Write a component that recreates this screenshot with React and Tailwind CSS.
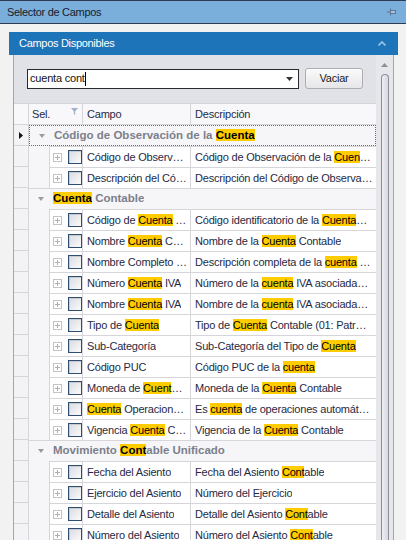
import React from "react";

/* Selector de Campos — panel de búsqueda de campos con grilla agrupada */

const GRUPOS = [
  {
    titulo: "Código de Observación de la [Cuenta]",
    foco: true,
    filas: [
      ["Código de Observ…", "Código de Observación de la [Cuen]…"],
      ["Descripción del Có…", "Descripción del Código de Observa…"],
    ],
  },
  {
    titulo: "[Cuenta] Contable",
    filas: [
      ["Código de [Cuenta] …", "Código identificatorio de la [Cuenta]…"],
      ["Nombre [Cuenta] C…", "Nombre de la [Cuenta] Contable"],
      ["Nombre Completo …", "Descripción completa de la [cuenta] …"],
      ["Número [Cuenta] IVA", "Número de la [cuenta] IVA asociada…"],
      ["Nombre [Cuenta] IVA", "Nombre de la [cuenta] IVA asociada…"],
      ["Tipo de [Cuenta]", "Tipo de [Cuenta] Contable (01: Patr…"],
      ["Sub-Categoría", "Sub-Categoría del Tipo de [Cuenta]"],
      ["Código PUC", "Código PUC de la [cuenta]"],
      ["Moneda de [Cuent]…", "Moneda de la [Cuenta] Contable"],
      ["[Cuenta] Operacion…", "Es [cuenta] de operaciones automát…"],
      ["Vigencia [Cuenta] C…", "Vigencia de la [Cuenta] Contable"],
    ],
  },
  {
    titulo: "Movimiento [Cont]able Unificado",
    filas: [
      ["Fecha del Asiento", "Fecha del Asiento [Cont]able"],
      ["Ejercicio del Asiento", "Número del Ejercicio"],
      ["Detalle del Asiento", "Detalle del Asiento [Cont]able"],
      ["Número del Asiento", "Número del Asiento [Cont]able"],
    ],
  },
];

// "[texto]" = coincidencia resaltada
function Resaltado({ texto }) {
  return (
    <span className="block overflow-hidden whitespace-nowrap">
      {texto.split(/(\[[^\]]+\])/).map((p, i) =>
        p.startsWith("[") ? (
          <span key={i} className="bg-[#ffcc00] text-black">
            {p.slice(1, -1)}
          </span>
        ) : (
          <React.Fragment key={i}>{p}</React.Fragment>
        )
      )}
    </span>
  );
}

function Expandir() {
  return (
    <svg width="9" height="9" viewBox="0 0 9 9" className="shrink-0">
      <rect x="0.5" y="0.5" width="8" height="8" fill="#fff" stroke="#c4c4c8" />
      <path d="M2 4.5h5M4.5 2v5" stroke="#b0b0b6" />
    </svg>
  );
}

function Check() {
  return (
    <div className="w-[14px] h-[14px] shrink-0 border border-[#2e4d72] bg-gradient-to-br from-[#d9dbe0] to-[#fbfbfc] shadow-[inset_1px_1px_0_#c8cad0]" />
  );
}

function FilaGrupo({ titulo, foco }) {
  return (
    <div className="flex h-[21px]">
      <div className="w-[15px] shrink-0 border-r border-b border-[#d6d6da] bg-[#f3f3f5] flex items-center justify-center">
        {foco && (
          <svg width="4" height="7" viewBox="0 0 4 7">
            <path d="M0 0l4 3.5L0 7z" fill="#111" />
          </svg>
        )}
      </div>
      <div
        className={
          "flex-1 min-w-0 flex items-center bg-[#f6f6f8] " +
          (foco ? "border border-dotted border-[#6a6a70]" : "border-t border-[#d6d6da]")
        }
      >
        <svg width="6" height="4" viewBox="0 0 6 4" className="ml-[9px] mr-[9px] shrink-0">
          <path d="M0 0h6L3 4z" fill="#9a9aa2" />
        </svg>
        <span className="font-bold text-[11.5px] tracking-normal text-[#7c7f8b]">
          <Resaltado texto={titulo} />
        </span>
      </div>
    </div>
  );
}

function FilaDato({ campo, desc }) {
  return (
    <div className="flex h-[21px]">
      <div className="w-[15px] shrink-0 border-r border-b border-[#d6d6da] bg-[#f3f3f5]" />
      <div className="w-[21px] shrink-0 border-r border-[#d6d6da] bg-[#f6f6f8]" />
      <div className="w-[33px] shrink-0 border-t border-r border-[#d6d6da] bg-white flex items-center pl-[3px] gap-[6px]">
        <Expandir />
        <Check />
      </div>
      <div className="w-[108px] shrink-0 border-t border-r border-[#d6d6da] bg-white flex items-center px-[4px] overflow-hidden text-[#1f2a44]">
        <Resaltado texto={campo} />
      </div>
      <div className="flex-1 min-w-0 border-t border-[#d6d6da] bg-white flex items-center px-[4px] overflow-hidden text-[#1f2a44]">
        <Resaltado texto={desc} />
      </div>
    </div>
  );
}

export default function App() {
  return (
    <div className="w-[406px] h-[540px] overflow-hidden bg-[#f2f2f3] font-['Liberation_Sans',Arial,sans-serif] text-[11px] tracking-[-0.2px]">
      {/* barra de título */}
      <div className="h-[24px] border-t border-b border-[#2f3b52] bg-[#7aaedb] flex items-center justify-between pl-[7px] pr-[9px]">
        <span className="text-[11px] tracking-[-0.3px] text-[#14202e]">Selector de Campos</span>
        <svg width="10" height="8" viewBox="0 0 10 8">
          <path d="M0 4h3" stroke="#5f7594" />
          <rect x="3.5" y="2.5" width="5" height="3" fill="#a8c4e0" stroke="#5f7594" />
          <path d="M3.5 0.5v7" stroke="#5f7594" />
        </svg>
      </div>

      <div className="pl-[9px] pr-[8px] pt-[8px]">
        {/* cabecera del panel */}
        <div className="h-[23px] bg-[#1e74b8] flex items-center justify-between pl-[10px] pr-[12px]">
          <span className="text-[11px] tracking-[-0.3px] text-white">Campos Disponibles</span>
          <svg width="8" height="5" viewBox="0 0 8 5">
            <path d="M0.5 4.5L4 1l3.5 3.5" stroke="#9cc2e6" strokeWidth="1.6" fill="none" />
          </svg>
        </div>

        {/* cuerpo */}
        <div className="ml-[4px] w-[381px] h-[500px] flex border-l border-r border-[#a2a4ae] bg-[#e1e2e7]">
          <div className="w-[362px] shrink-0 flex flex-col">
            <div className="flex items-center pt-[13px] pb-[14px] pl-[13px]">
              <div className="w-[272px] h-[20px] border border-[#2a2a2e] bg-white flex items-center pl-[2px] pr-[5px]">
                <span className="text-[#111]">cuenta cont</span>
                <span className="w-px h-[14px] bg-black" />
                <svg width="7" height="4" viewBox="0 0 7 4" className="ml-auto">
                  <path d="M0 0h7L3.5 4z" fill="#333" />
                </svg>
              </div>
              <button className="ml-[6px] w-[58px] h-[21px] rounded-[3px] border border-[#adadb3] bg-gradient-to-b from-[#fbfbfb] to-[#e6e6e8] text-[#1b1b1b] flex items-center justify-center">
                Vaciar
              </button>
            </div>

            {/* grilla */}
            <div className="flex h-[22px] border-t border-b border-[#d6d6da] bg-[#f8f8fa] text-[#1f2a44]">
              <div className="w-[15px] shrink-0 border-r border-[#d6d6da]" />
              <div className="w-[54px] shrink-0 border-r border-[#d6d6da] flex items-center justify-between pl-[3px] pr-[4px]">
                <span>Sel.</span>
                <svg width="7" height="7" viewBox="0 0 7 7" className="-mt-[6px]">
                  <path d="M0 0h7L4.2 3.2V7L2.8 6V3.2z" fill="#9eb2c8" />
                </svg>
              </div>
              <div className="w-[108px] shrink-0 border-r border-[#d6d6da] flex items-center px-[4px]">Campo</div>
              <div className="flex-1 flex items-center px-[4px]">Descripción</div>
            </div>

            {GRUPOS.map((g, gi) => (
              <div key={gi}>
                <FilaGrupo titulo={g.titulo} foco={g.foco} />
                {g.filas.map((f, fi) => (
                  <FilaDato key={fi} campo={f[0]} desc={f[1]} />
                ))}
              </div>
            ))}
          </div>

          {/* barra de desplazamiento */}
          <div className="w-[17px] shrink-0 bg-[#e6e7eb] flex flex-col items-center pt-[8px]">
            <svg width="7" height="4" viewBox="0 0 7 4">
              <path d="M0 4h7L3.5 0z" fill="#8e8e96" />
            </svg>
            <div className="mt-[7px] w-[8px] flex-1 rounded-t-full border border-b-0 border-[#8d8e9c] bg-gradient-to-r from-[#eeeef2] to-[#d8d9e0]" />
          </div>
        </div>
      </div>
    </div>
  );
}
